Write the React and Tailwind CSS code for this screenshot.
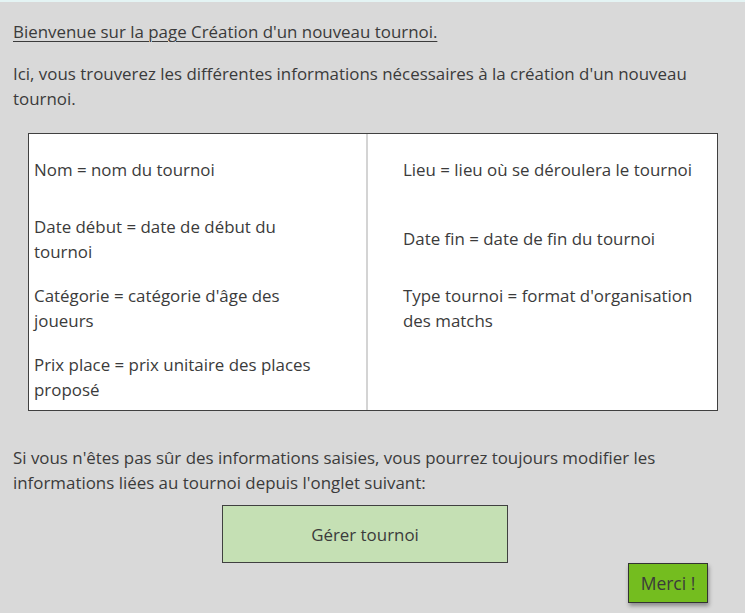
import React from "react";

const Line = ({ children }) => <span className="block whitespace-nowrap">{children}</span>;

export default function App() {
  return (
    <div
      className="w-[745px] h-[613px] bg-[#d9d9d9] text-[#3b3b3b] text-[16.9px] leading-[25px] overflow-hidden border-t-2 border-[#e4f4f4]"
      style={{ fontFamily: '"Open Sans", sans-serif' }}
    >
      <div className="pl-[13px] pt-[17px]">
        <p className="underline underline-offset-[3px] decoration-1">Bienvenue sur la page Création d'un nouveau tournoi.</p>
        <p className="mt-[17px]">
          <Line>Ici, vous trouverez les différentes informations nécessaires à la création d'un nouveau</Line>
          <Line>tournoi.</Line>
        </p>
      </div>

      <div className="ml-[28px] mt-[22px] w-[690px] h-[278px] bg-white border border-[#404040] grid grid-cols-[339px_1fr] grid-rows-4">
        <div className="pl-[5px] pt-[2px] flex items-center border-r-2 border-[#d4d4d4]"><Line>Nom = nom du tournoi</Line></div>
        <div className="pl-[35px] pt-[2px] flex items-center"><Line>Lieu = lieu où se déroulera le tournoi</Line></div>
        <div className="pl-[5px] pt-[2px] flex flex-col justify-center border-r-2 border-[#d4d4d4]">
          <Line>Date début = date de début du</Line>
          <Line>tournoi</Line>
        </div>
        <div className="pl-[35px] pt-[2px] flex items-center"><Line>Date fin = date de fin du tournoi</Line></div>
        <div className="pl-[5px] pt-[2px] flex flex-col justify-center border-r-2 border-[#d4d4d4]">
          <Line>Catégorie = catégorie d'âge des</Line>
          <Line>joueurs</Line>
        </div>
        <div className="pl-[35px] pt-[2px] flex flex-col justify-center">
          <Line>Type tournoi = format d'organisation</Line>
          <Line>des matchs</Line>
        </div>
        <div className="pl-[5px] pt-[2px] flex flex-col justify-center border-r-2 border-[#d4d4d4]">
          <Line>Prix place = prix unitaire des places</Line>
          <Line>proposé</Line>
        </div>
        <div />
      </div>

      <p className="pl-[13px] mt-[34px]">
        <Line>Si vous n'êtes pas sûr des informations saisies, vous pourrez toujours modifier les</Line>
        <Line>informations liées au tournoi depuis l'onglet suivant:</Line>
      </p>

      <div className="ml-[222px] mt-[10px] w-[286px] h-[58px] bg-[#c5e0b4] border border-[#404040] flex items-center justify-center">
        Gérer tournoi
      </div>

      <div className="flex justify-end pr-[37px]">
        <div className="w-[80px] h-[40px] bg-[#74bd1f] border border-[#333] flex items-center justify-center shadow-[1px_3px_4px_rgba(0,0,0,0.35)] text-[17.5px]">
          Merci !
        </div>
      </div>
    </div>
  );
}
